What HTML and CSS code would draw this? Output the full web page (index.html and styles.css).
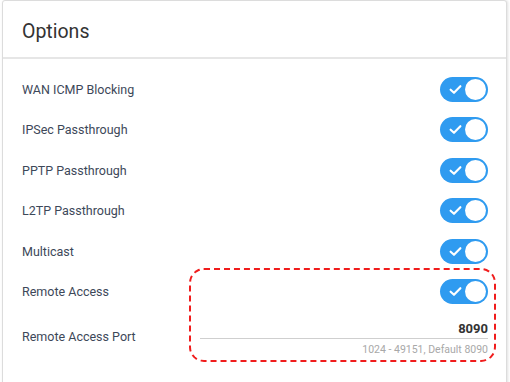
FILE: index.html
```html
<!DOCTYPE html>
<html lang="en">
<head>
    <meta charset="UTF-8" />
    <title>Options</title>
    <link rel="stylesheet" href="styles.css">
</head>
<body>
    <div class="card">
        <div class="card-header">Options</div>
        <div class="card-body">
            <div class="row">
                <span class="label">WAN ICMP Blocking</span>
                <span class="toggle on"><svg viewBox="0 0 12 10"><path d="M1.5 5.2 L4.6 8 L10.5 2"/></svg><span class="knob"></span></span>
            </div>
            <div class="row">
                <span class="label">IPSec Passthrough</span>
                <span class="toggle on"><svg viewBox="0 0 12 10"><path d="M1.5 5.2 L4.6 8 L10.5 2"/></svg><span class="knob"></span></span>
            </div>
            <div class="row">
                <span class="label">PPTP Passthrough</span>
                <span class="toggle on"><svg viewBox="0 0 12 10"><path d="M1.5 5.2 L4.6 8 L10.5 2"/></svg><span class="knob"></span></span>
            </div>
            <div class="row">
                <span class="label">L2TP Passthrough</span>
                <span class="toggle on"><svg viewBox="0 0 12 10"><path d="M1.5 5.2 L4.6 8 L10.5 2"/></svg><span class="knob"></span></span>
            </div>
            <div class="row">
                <span class="label">Multicast</span>
                <span class="toggle on"><svg viewBox="0 0 12 10"><path d="M1.5 5.2 L4.6 8 L10.5 2"/></svg><span class="knob"></span></span>
            </div>
            <div class="remote-group">
                <div class="highlight"></div>
                <div class="row">
                    <span class="label">Remote Access</span>
                    <span class="toggle on"><svg viewBox="0 0 12 10"><path d="M1.5 5.2 L4.6 8 L10.5 2"/></svg><span class="knob"></span></span>
                </div>
                <div class="row port-row">
                    <span class="label">Remote Access Port</span>
                    <div class="port-field">
                        <div class="port-value">8090</div>
                        <div class="port-hint">1024 - 49151, Default 8090</div>
                    </div>
                </div>
            </div>
        </div>
    </div>
</body>
</html>
```

FILE: styles.css
```css
* {
    box-sizing: border-box;
}

body {
    margin: 0;
    background: #fff;
    font-family: Roboto, "Liberation Sans", sans-serif;
    padding: 0 3px 0 2px;
}

.card {
    height: 400px;
    border: 1px solid #dcdcdc;
    border-radius: 3px 3px 0 0;
    background: #fff;
    box-shadow: 1px 0 3px rgba(0, 0, 0, 0.12);
}

.card-header {
    height: 58px;
    padding: 4px 19px 0;
    display: flex;
    align-items: center;
    font-size: 19.5px;
    color: #333;
    border-bottom: 2px solid #e6e6e6;
}

.card-body {
    padding: 10px 18px 0 19px;
}

.row {
    height: 40.5px;
    display: flex;
    align-items: center;
    justify-content: space-between;
}

.label {
    font-size: 12.5px;
    color: #3d4859;
}

.toggle {
    width: 48px;
    height: 25px;
    border-radius: 13px;
    background: #2f9bf0;
    display: flex;
    align-items: center;
    justify-content: space-between;
    padding: 0 2px 0 9px;
}

.toggle svg {
    width: 13px;
    height: 11px;
    fill: none;
    stroke: #fff;
    stroke-width: 2;
    stroke-linecap: round;
    stroke-linejoin: round;
}

.knob {
    width: 21px;
    height: 21px;
    border-radius: 50%;
    background: #fff;
}

.remote-group {
    position: relative;
}

.highlight {
    position: absolute;
    left: 167px;
    top: -4px;
    width: 307px;
    height: 94px;
    border: 2px dashed #f01c1c;
    border-radius: 15px;
}

.port-row {
    height: 50px;
    align-items: flex-start;
}

.port-row .label {
    margin-top: 17px;
}

.port-field {
    width: 288px;
    text-align: right;
}

.port-value {
    font-size: 13px;
    font-weight: bold;
    color: #333;
    padding-top: 9px;
    padding-bottom: 2px;
    border-bottom: 1px solid #cfcfcf;
}

.port-hint {
    font-size: 10.5px;
    color: #a8a8a8;
    margin-top: 4px;
}
```
